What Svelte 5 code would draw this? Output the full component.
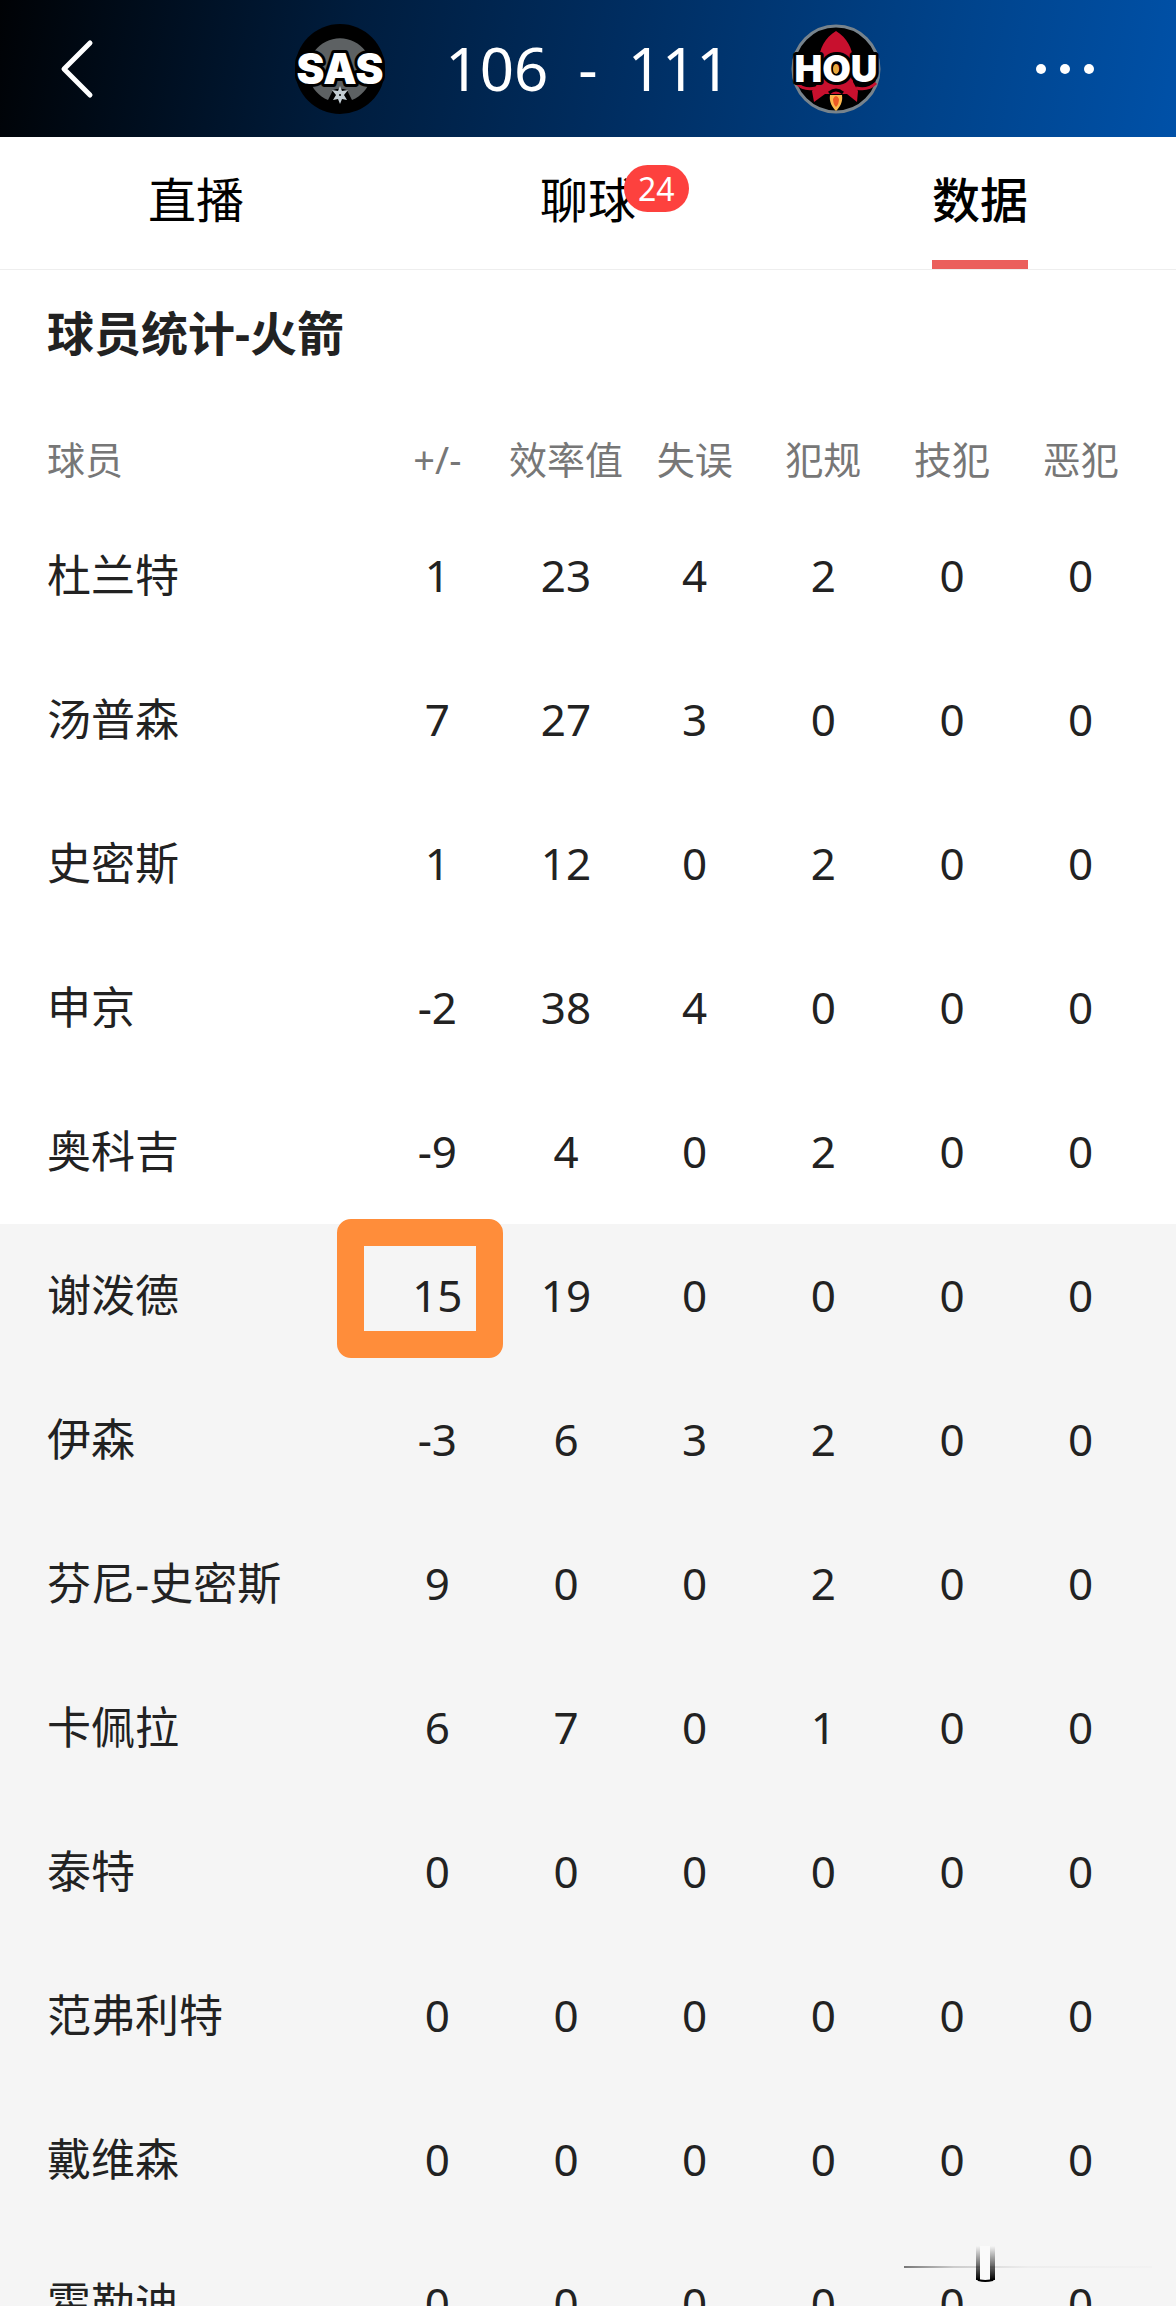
<script>
  const tabs = [
    { id: 'live', label: '直播' },
    { id: 'chat', label: '聊球', badge: 24 },
    { id: 'stats', label: '数据' }
  ];
  let active = $state('stats');

  const columns = ['+/-', '效率值', '失误', '犯规', '技犯', '恶犯'];

  const starters = [
    { name: '杜兰特', stats: [1, 23, 4, 2, 0, 0] },
    { name: '汤普森', stats: [7, 27, 3, 0, 0, 0] },
    { name: '史密斯', stats: [1, 12, 0, 2, 0, 0] },
    { name: '申京', stats: [-2, 38, 4, 0, 0, 0] },
    { name: '奥科吉', stats: [-9, 4, 0, 2, 0, 0] }
  ];
  // marked: index of the stat that gets the orange frame
  const bench = [
    { name: '谢泼德', stats: [15, 19, 0, 0, 0, 0], marked: 0 },
    { name: '伊森', stats: [-3, 6, 3, 2, 0, 0] },
    { name: '芬尼-史密斯', stats: [9, 0, 0, 2, 0, 0] },
    { name: '卡佩拉', stats: [6, 7, 0, 1, 0, 0] },
    { name: '泰特', stats: [0, 0, 0, 0, 0, 0] },
    { name: '范弗利特', stats: [0, 0, 0, 0, 0, 0] },
    { name: '戴维森', stats: [0, 0, 0, 0, 0, 0] },
    { name: '霍勒迪', stats: [0, 0, 0, 0, 0, 0] }
  ];
</script>

{#snippet row(player)}
  <tr>
    <th scope="row">{player.name}</th>
    {#each player.stats as value, i}
      <td class:marked={player.marked === i}>{value}</td>
    {/each}
  </tr>
{/snippet}

<div class="page">
  <header>
    <button class="back" aria-label="返回">
      <svg width="36" height="60" viewBox="0 0 36 60">
        <path d="M30 4 4 30 30 56" fill="none" stroke="#fff" stroke-width="5" stroke-linecap="round" stroke-linejoin="round" />
      </svg>
    </button>

    <div class="board">
      <svg width="90" height="90" viewBox="0 0 90 90" role="img" aria-label="SAS">
        <circle cx="45" cy="45" r="45" fill="#000" />
        <path d="M33 76A32 32 0 1 1 57 76L52 66A22 22 0 0 0 38 66Z" fill="#5d6163" />
        <text class="sas" x="45" y="60" text-anchor="middle">SAS</text>
        <path d="M45 62 47 67 53 66 49 71 52 76 47 75 45 80 43 75 38 76 41 71 37 66 43 67Z" fill="#c4ced4" />
        <circle cx="45" cy="71" r="1" fill="#000" />
      </svg>

      <div class="score"><span>106</span><span>-</span><span>111</span></div>

      <svg width="90" height="90" viewBox="0 0 90 90" role="img" aria-label="HOU">
        <circle cx="45" cy="45" r="43" fill="#000" stroke="#77838c" stroke-width="3" />
        <path d="M45 7C34 14 28 24 28 38L28 58 21 67 23 78 34 70 56 70 66 78 67 67 62 58 62 38C62 24 56 14 45 7Z" fill="#c8102e" />
        <path d="M5 59Q13 67 25 64M85 59Q77 67 65 64" fill="none" stroke="#c8102e" stroke-width="3" />
        <path d="M38 69Q45 63 52 69" fill="none" stroke="#000" stroke-width="3" />
        <path d="M39 71H51C52 78 49 83 45 87 41 83 38 78 39 71Z" fill="#fdb94d" />
        <path d="M42 75Q45 69 48 75 48 80 45 83 42 80 42 75Z" fill="#ee5a24" />
        <text class="hou" x="45" y="58" text-anchor="middle">HOU</text>
        <ellipse cx="45" cy="45" rx="3" ry="5" fill="#e9aa3c" />
      </svg>
    </div>

    <button class="more" aria-label="更多">
      <svg width="58" height="10" viewBox="0 0 58 10" fill="#fff">
        <circle cx="5" cy="5" r="5" />
        <circle cx="29" cy="5" r="5" />
        <circle cx="53" cy="5" r="5" />
      </svg>
    </button>
  </header>

  <nav>
    {#each tabs as tab}
      <button class="tab" class:active={active === tab.id} onclick={() => (active = tab.id)}>
        <span class="label">
          {tab.label}
          {#if tab.badge}<span class="badge">{tab.badge}</span>{/if}
        </span>
      </button>
    {/each}
  </nav>

  <main>
    <h2>球员统计-火箭</h2>
    <table>
      <thead>
        <tr>
          <th scope="col">球员</th>
          {#each columns as column}
            <th scope="col">{column}</th>
          {/each}
        </tr>
      </thead>
      <tbody>
        {#each starters as player}{@render row(player)}{/each}
      </tbody>
      <tbody class="bench">
        {#each bench as player}{@render row(player)}{/each}
      </tbody>
    </table>
  </main>

  <svg class="mark" width="248" height="40" viewBox="0 0 248 40" aria-hidden="true">
    <defs>
      <linearGradient id="line">
        <stop offset="0" stop-color="#777" />
        <stop offset="0.2" stop-color="#ccc" />
        <stop offset="0.5" stop-color="#ededed" />
        <stop offset="1" stop-color="#f2f2f2" />
      </linearGradient>
      <linearGradient id="stem" x2="0" y2="1">
        <stop offset="0" stop-color="#000" stop-opacity="0" />
        <stop offset="1" stop-color="#000" />
      </linearGradient>
    </defs>
    <rect x="0" y="22" width="248" height="2" fill="url(#line)" />
    <rect x="76" y="2" width="10" height="34" fill="#fafafa" />
    <rect x="72" y="2" width="4" height="34" fill="url(#stem)" />
    <rect x="86" y="2" width="5" height="34" fill="url(#stem)" />
    <path d="M72 34Q81 38 91 34L89 37Q81 39 74 37Z" fill="#000" />
  </svg>
</div>

<style>
  :global(body) { margin: 0; background: #fff; }
  .page { position: relative; display: flex; flex-direction: column; height: 100vh; overflow: hidden; font-family: 'Noto Sans', 'Noto Sans CJK SC', sans-serif; color: #222; }
  button { border: 0; padding: 0; background: none; font: inherit; color: inherit; cursor: pointer; }
  svg { display: block; }

  header { flex: none; display: grid; grid-template-columns: 1fr auto 1fr; align-items: center; height: 137px; padding: 0 60px; box-sizing: border-box; background: linear-gradient(100deg, #000205 0%, #001d3e 30%, #002d60 52%, #00438b 80%, #0051a8 100%); }
  .back { justify-self: start; }
  .more { justify-self: end; padding: 0 22px; }
  .board { display: flex; align-items: center; justify-content: space-between; gap: 60px; }
  .score { display: flex; gap: 30px; font-size: 60px; line-height: 72px; padding-bottom: 2px; color: #fff; }
  .sas, .hou { fill: #fff; stroke: #000; stroke-width: 6px; stroke-linejoin: round; paint-order: stroke; }
  .sas { font: 900 42px Inter, sans-serif; }
  .hou { font: 900 37px Inter, sans-serif; }

  nav { flex: none; display: grid; grid-template-columns: repeat(3, 1fr); height: 133px; box-sizing: border-box; border-bottom: 1px solid #eee; }
  .tab { display: flex; justify-content: center; font-size: 48px; line-height: 126px; color: #000; }
  .label { position: relative; height: 132px; box-sizing: border-box; }
  .active { font-weight: 500; }
  .active .label { border-bottom: 9px solid #eb5f5c; }
  .badge { position: absolute; top: 28px; left: 84px; padding: 0 14px; border-radius: 24px; background: #fd413e; color: #fff; font-size: 32px; line-height: 47px; }

  main { flex: 1; min-height: 0; overflow: hidden; }
  h2 { margin: 0 47px 20px; font-size: 47px; line-height: 126px; font-weight: 700; }
  table { display: block; }
  thead, tbody { display: block; }
  tr { display: grid; grid-template-columns: 326px repeat(6, 1fr); padding: 0 31px 0 47px; }
  th, td { padding: 0 0 2px; font-size: 44px; line-height: 142px; font-weight: 400; text-align: center; white-space: nowrap; }
  th:first-child { text-align: left; }
  thead th { font-size: 38px; line-height: 86px; color: #777; }
  .bench { background: #f5f5f5; }
  .marked { position: relative; }
  .marked::after { content: ''; position: absolute; inset: -5px -1px 10px -36px; border: 27px solid #ff8d3a; border-radius: 14px; }
  .mark { position: absolute; right: 24px; bottom: 22px; }
</style>
